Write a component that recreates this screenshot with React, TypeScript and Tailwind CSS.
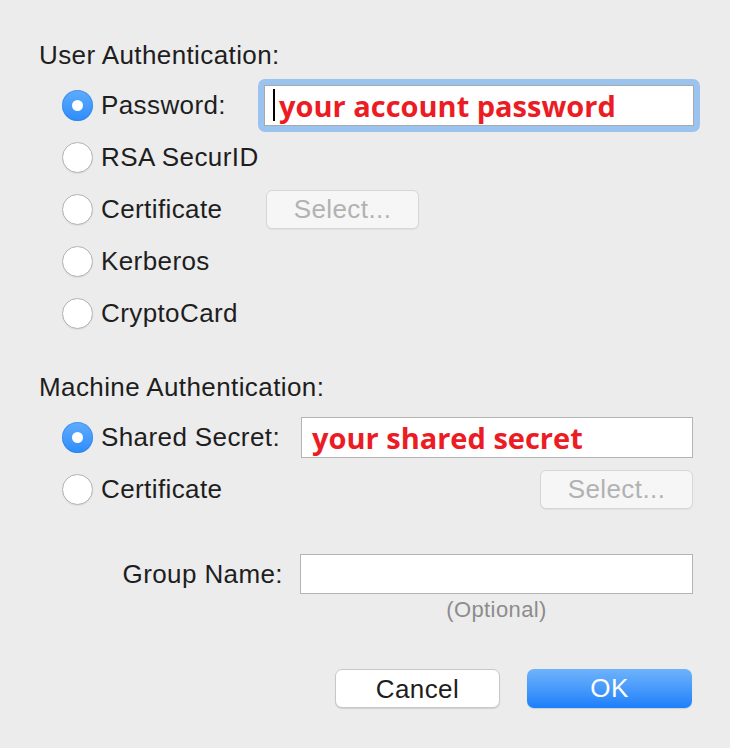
import React from 'react';

const Radio: React.FC<{ checked?: boolean }> = ({ checked }) =>
  checked ? (
    <span className="flex h-[31px] w-[31px] shrink-0 items-center justify-center rounded-full bg-linear-to-b from-[#5eacfd] to-[#2d8cfb] shadow-[inset_0_0_0_1px_rgba(30,110,220,0.35)]">
      <span className="h-[11px] w-[11px] rounded-full bg-white" />
    </span>
  ) : (
    <span className="h-[31px] w-[31px] shrink-0 rounded-full border border-[#b3b3b3] bg-white shadow-[0_1px_1px_rgba(0,0,0,0.06)]" />
  );

const Option: React.FC<{ label: string; checked?: boolean; width: string; children?: React.ReactNode }> = ({
  label,
  checked,
  width,
  children,
}) => (
  <div className="flex h-[52px] items-center">
    <div className={`flex shrink-0 items-center gap-[8px] ${width}`}>
      <Radio checked={checked} />
      <span>{label}</span>
    </div>
    {children}
  </div>
);

const SelectButton: React.FC<{ className?: string }> = ({ className }) => (
  <button
    type="button"
    className={`flex h-[39px] w-[153px] shrink-0 items-center justify-center rounded-[6px] border border-[#d6d6d6] bg-[#f6f6f6] text-[#b2b2b2] shadow-[0_1px_1px_rgba(0,0,0,0.05)] ${className ?? ''}`}
  >
    Select...
  </button>
);

export default function App() {
  return (
    <div className="h-[748px] w-[730px] bg-[#ececec] pl-[39px] pr-[37px] pt-[40px] font-['Liberation_Sans',Arial,sans-serif] text-[26px] tracking-[0.4px] text-[#1e1e1e]">
      {/* User authentication */}
      <div className="h-[30px] leading-[30px]">User Authentication:</div>
      <div className="mt-[9px] pl-[23px]">
        <Option label="Password:" checked width="w-[196px]">
          <div className="shrink-0 rounded-[7px] bg-[#9bc3ef] p-[6px]">
            <div className="flex h-[41px] w-[430px] items-center border border-[#a9a9a9] bg-white pl-[8px]">
              <span className="h-[32px] w-[2px] bg-black" />
              <span className="ml-[4px] font-['Open_Sans',sans-serif] text-[29px] font-bold leading-none tracking-normal text-[#ec1c24]">
                your account password
              </span>
            </div>
          </div>
        </Option>
        <Option label="RSA SecurID" width="w-[204px]" />
        <Option label="Certificate" width="w-[204px]">
          <SelectButton />
        </Option>
        <Option label="Kerberos" width="w-[204px]" />
        <Option label="CryptoCard" width="w-[204px]" />
      </div>

      {/* Machine authentication */}
      <div className="mt-[33px] h-[30px] leading-[30px]">Machine Authentication:</div>
      <div className="mt-[9px] pl-[23px]">
        <Option label="Shared Secret:" checked width="w-[239px]">
          <div className="flex h-[41px] flex-1 items-center border border-[#b4b4b4] bg-white pl-[10px]">
            <span className="font-['Open_Sans',sans-serif] text-[29px] font-bold leading-none tracking-normal text-[#ec1c24]">
              your shared secret
            </span>
          </div>
        </Option>
        <Option label="Certificate" width="w-[239px]">
          <SelectButton className="ml-auto" />
        </Option>
      </div>

      {/* Group name */}
      <div className="mt-[39px] flex h-[40px] items-center">
        <span className="w-[244px] text-right">Group Name:</span>
        <div className="ml-[17px] h-[40px] flex-1 border border-[#b4b4b4] bg-white" />
      </div>
      <div className="mt-[4px] flex h-[24px] items-center">
        <span className="w-[261px]" />
        <span className="flex-1 text-center text-[22px] leading-[24px] text-[#8c8c8c]">(Optional)</span>
      </div>

      {/* Buttons */}
      <div className="mt-[47px] flex justify-end gap-[27px] pr-px">
        <button
          type="button"
          className="h-[39px] w-[165px] rounded-[7px] border border-[#c8c8c8] bg-white text-[#1e1e1e] shadow-[0_1px_1px_rgba(0,0,0,0.12)]"
        >
          Cancel
        </button>
        <button
          type="button"
          className="h-[39px] w-[165px] rounded-[7px] bg-linear-to-b from-[#6db3fb] to-[#1a7ffa] text-white shadow-[0_1px_1px_rgba(0,0,0,0.12)]"
        >
          OK
        </button>
      </div>
    </div>
  );
}
